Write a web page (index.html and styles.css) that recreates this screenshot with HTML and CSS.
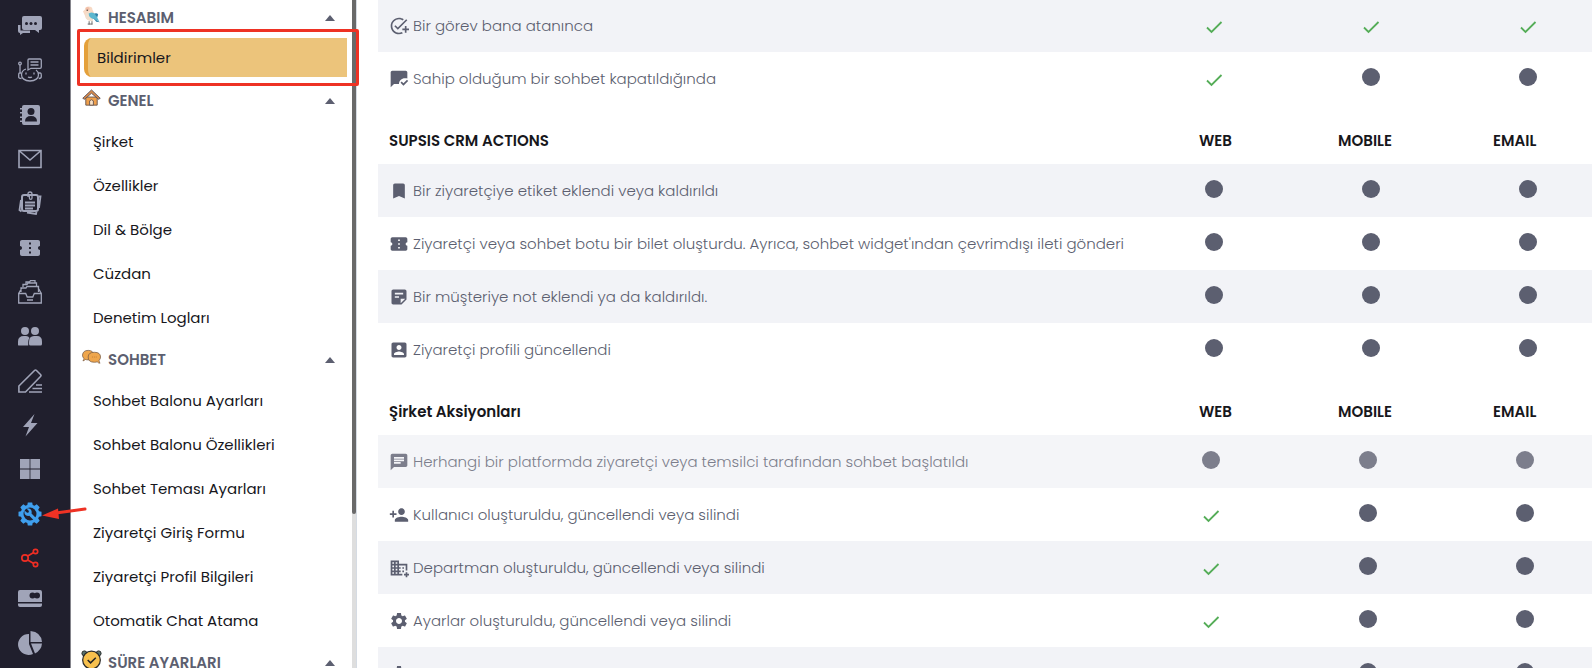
FILE: index.html
```html
<!DOCTYPE html>
<html lang="tr">
<head>
<meta charset="utf-8">
<meta name="viewport" content="width=device-width, initial-scale=1">
<title>Bildirimler</title>
<link rel="stylesheet" href="styles.css">
</head>
<body>
<svg class="sprite" aria-hidden="true">
  <symbol id="add-task" viewBox="0 0 24 24"><path d="M22 5.18 10.59 16.6l-4.24-4.24 1.41-1.41 2.83 2.83 10-10zM12 20c-4.41 0-8-3.59-8-8s3.59-8 8-8c1.57 0 3.04.46 4.28 1.25l1.45-1.45C16.1 2.67 14.13 2 12 2 6.48 2 2 6.48 2 12s4.48 10 10 10c1.73 0 3.36-.44 4.78-1.22l-1.5-1.5c-1 .46-2.11.72-3.28.72zm7-5h-3v2h3v3h2v-3h3v-2h-3v-3h-2z"/></symbol>
  <symbol id="chat-read" viewBox="0 0 24 24"><path d="M12 18H6l-4 4V4c0-1.1.9-2 2-2h16c1.1 0 2 .9 2 2v7.300c-1-.3-2-.4-3-.3-3.900 0-7 3.100-7 7zM23 14.34l-1.410-1.410-4.240 4.240-2.120-2.120-1.410 1.410L17.340 20z"/></symbol>
  <symbol id="bookmark" viewBox="0 0 24 24"><path d="M17 3H7c-1.100 0-2 .9-2 2v16l7-3 7 3V5c0-1.100-.9-2-2-2z"/></symbol>
  <symbol id="ticket" viewBox="0 0 24 24"><path d="M22 10V6c0-1.110-.9-2-2-2H4c-1.100 0-2 .89-2 2v4c1.100 0 2 .9 2 2s-.9 2-2 2v4c0 1.100.9 2 2 2h16c1.100 0 2-.9 2-2v-4c-1.100 0-2-.9-2-2s.9-2 2-2zm-9 7.500h-2v-2h2zm0-4.500h-2v-2h2zm0-4.500h-2v-2h2z"/></symbol>
  <symbol id="note" viewBox="0 0 24 24"><path fill-rule="evenodd" d="M5 3h14c1.100 0 2 .9 2 2v10l-6 6H5c-1.100 0-2-.9-2-2V5c0-1.100.9-2 2-2zm2 4v2h10V7zm0 4v2h5v-2zm7 3v5.500l5.500-5.500z"/></symbol>
  <symbol id="profile" viewBox="0 0 24 24"><path d="M3 5v14c0 1.100.89 2 2 2h14c1.100 0 2-.9 2-2V5c0-1.100-.9-2-2-2H5c-1.110 0-2 .9-2 2zm12 4c0 1.660-1.340 3-3 3s-3-1.340-3-3 1.340-3 3-3 3 1.340 3 3zm-9 8c0-2 4-3.100 6-3.100s6 1.100 6 3.100v1H6z"/></symbol>
  <symbol id="chat" viewBox="0 0 24 24"><path d="M20 2H4c-1.100 0-2 .9-2 2v18l4-4h14c1.100 0 2-.9 2-2V4c0-1.100-.9-2-2-2zM6 9h12v2H6zm8 5H6v-2h8zm4-6H6V6h12z"/></symbol>
  <symbol id="person-add" viewBox="0 0 24 24"><path d="M15 12c2.210 0 4-1.790 4-4s-1.790-4-4-4-4 1.790-4 4 1.790 4 4 4zm-9-2V7H4v3H1v2h3v3h2v-3h3v-2zm9 4c-2.670 0-8 1.340-8 4v2h16v-2c0-2.660-5.330-4-8-4z"/></symbol>
  <symbol id="domain-add" viewBox="0 0 24 24"><path d="M12 7V3H2v18h14v-2h-4v-2h2v-2h-2v-2h2v-2h-2V9h8v6h2V7zM6 19H4v-2h2zm0-4H4v-2h2zm0-4H4V9h2zm0-4H4V5h2zm4 12H8v-2h2zm0-4H8v-2h2zm0-4H8V9h2zm0-4H8V5h2zm14 12v2h-2v2h-2v-2h-2v-2h2v-2h2v2zm-6-8h-2v2h2zm0 4h-2v2h2z"/></symbol>
  <symbol id="gear" viewBox="0 0 24 24"><path d="M19.140 12.940c.04-.3.06-.61.06-.94 0-.32-.02-.64-.07-.94l2.030-1.580c.18-.14.23-.41.12-.61l-1.920-3.320c-.12-.22-.37-.29-.59-.22l-2.390.96c-.5-.38-1.030-.7-1.620-.94l-.36-2.540c-.04-.24-.24-.41-.48-.41h-3.840c-.24 0-.43.17-.47.41l-.36 2.540c-.59.24-1.130.57-1.620.94l-2.390-.96c-.22-.08-.47 0-.59.22L2.740 8.870c-.12.21-.08.47.12.61l2.030 1.580c-.05.3-.09.63-.09.94s.02.64.07.94l-2.030 1.580c-.18.14-.23.41-.12.61l1.920 3.320c.12.22.37.29.59.22l2.390-.96c.5.38 1.030.7 1.620.94l.36 2.540c.05.24.24.41.48.41h3.840c.24 0 .44-.17.47-.41l.36-2.540c.59-.24 1.130-.56 1.620-.94l2.390.96c.22.08.47 0 .59-.22l1.920-3.320c.12-.22.07-.47-.12-.61zM12 15.600c-1.980 0-3.600-1.620-3.600-3.600s1.620-3.600 3.600-3.600 3.600 1.620 3.600 3.600-1.620 3.600-3.600 3.600z"/></symbol>
</svg>

<div class="app">
  <nav class="rail" aria-label="Ana menü">
    <a href="#" aria-label="Sohbetler"><svg viewBox="0 0 24 24"><path d="M6 2h16a2 2 0 0 1 2 2v10a2 2 0 0 1-2 2h-1v3l-4-3H6a2 2 0 0 1-2-2V4a2 2 0 0 1 2-2z"/><path d="M0 11h2.500v5.500H12V19H5l-3 2v-2a2 2 0 0 1-2-2z"/><g fill="#201f2d"><circle cx="8.500" cy="9.500" r="1.500"/><circle cx="13" cy="9.500" r="1.500"/><circle cx="17.500" cy="9.500" r="1.500"/></g></svg></a>
    <a href="#" aria-label="Sohbet botu"><svg class="line" viewBox="0 0 24 24"><path d="M8 11c-3 1-4.500 3-4.500 6s3 6 8.500 6 8.500-3 8.500-6c0-2-1-4-2.500-5M3 15H1.500Q.7 15 .7 17v2q0 1.500 2.800 1.500M20.500 15h1.800q1 0 1 2v1.500q0 2-2.500 2M2 15V7"/><circle cx="2" cy="5.500" r="1.300"/><path d="M11 1h11q1.300 0 1.300 1.300V9q0 1.300-1.300 1.300h-9L10 12V2q0-1 1-1zM12.500 4h8M12.500 7h8M8 14.500v2M16 14.500v2M10 19q2 1 4 0"/></svg></a>
    <a href="#" aria-label="Kişiler"><svg viewBox="0 0 24 24"><path d="M6 2h14a2 2 0 0 1 2 2v16a2 2 0 0 1-2 2H6a2 2 0 0 1-2-2v-1H2v-1.500h2V15H2v-1.500h2v-3H2V9h2V6.500H2V5h2V4a2 2 0 0 1 2-2z"/><circle cx="13" cy="8.500" r="3.500" fill="#201f2d"/><path fill="#201f2d" d="M7 18.500q0-5.500 6-5.500t6 5.500z"/></svg></a>
    <a href="#" aria-label="E-posta"><svg class="line" viewBox="0 0 24 24"><path stroke-width="1.600" d="M1 3.500h22v17H1zM1.500 4 12 13 22.500 4"/></svg></a>
    <a href="#" aria-label="Görevler"><svg class="line" viewBox="0 0 24 24"><path stroke-width="2" d="M6 4h12q2 0 2 2v12q0 2-2 2H6q-2 0-2-2V6q0-2 2-2z"/><path stroke-width="1.800" d="M21 5.500h1.500L21 17M3 9 1.500 19l2 1.500M9 21.500l9 1.500.5-2"/><path d="M10 6V3q0-2 2-2t2 2v4q0 1.300-1.300 1.300T11.400 7V5"/><path stroke-width="2" d="M7 11.500h10M7 14.500h10M7 17.500h8"/></svg></a>
    <a href="#" aria-label="Biletler"><svg><use href="#ticket"/></svg></a>
    <a href="#" aria-label="Arşiv"><svg class="line" viewBox="0 0 24 24"><path d="M.7 13.500h7l1.500 3.500h5.600l1.500-3.500h7V23H.7zM.7 13.500 4 7.500M23.300 13.500 20 7.500M3 12V8h5l1-1.500h11.500V12M5 7V4.500h4L10 3h8.500v3M8 4V2h3.500l1-1.300H17V3M9 20h6"/></svg></a>
    <a href="#" aria-label="Ekip"><svg viewBox="0 0 24 24"><circle cx="7" cy="7" r="4"/><circle cx="17" cy="7" r="4"/><path d="M0 21v-3.500Q0 12 6 12h2q2.500 0 3.500 2-1.300 1.500-1.300 4v3.500H1.500Q0 21.500 0 21z"/><path d="M11 18q0-6 5-6h3q5 0 5 5.500V20q0 1.500-1.500 1.500h-10Q11 21.500 11 20z"/></svg></a>
    <a href="#" aria-label="Düzenle"><svg class="line" viewBox="0 0 24 24"><path stroke-width="1.600" d="M.9 23V17L16.500 1.500q1-1 2 0l4 4q1 1 0 2L7.500 23zM18 16h6M14.500 19.500H24M11 23h13"/></svg></a>
    <a href="#" aria-label="Hızlı işlemler"><svg viewBox="0 0 24 24"><path d="M16.500 1 5 14h6L7.500 23.500 19.500 10H13z"/></svg></a>
    <a href="#" aria-label="Uygulamalar"><svg viewBox="0 0 24 24"><path d="M2 2h9.600v9.600H2zM12.400 2H22v9.600h-9.600zM2 12.400h9.600V22H2zM12.400 12.400H22V22h-9.600z"/></svg></a>
    <a href="#" class="current" aria-label="Ayarlar" aria-current="page"><svg viewBox="0 0 24 24"><path fill-rule="evenodd" d="M9.800.500h4.400l.5 2.600 1.800.7 2.200-1.500 3 3-1.500 2.200.8 1.800 2.500.5v4.400l-2.500.5-.8 1.800 1.500 2.200-3 3-2.200-1.500-1.800.8-.5 2.500H9.800L9.300 21l-1.800-.8-2.200 1.500-3-3 1.500-2.200L3 14.700.500 14.200V9.800L3 9.300l.8-1.800-1.500-2.200 3-3 2.200 1.500 1.800-.7zM12 5.500a6.500 6.500 0 1 0 0 13 6.500 6.500 0 0 0 0-13z"/><path d="M8.500 6.500l2.400 2.400-.3 1.500-1.500.3L6.500 8.500Q5.800 12.800 9 13.800q1.300.3 2.300 0l5.200 5.200 2.200-2.200-5.200-5.200q.7-2.800-1-4.300-1.800-1.400-4-.8z"/></svg></a>
    <a href="#" class="alert" aria-label="Paylaş"><svg class="line" viewBox="0 0 24 24"><g stroke-width="1.700"><circle cx="7" cy="12" r="3.200"/><circle cx="17.500" cy="5.500" r="2.200"/><circle cx="17.500" cy="18.500" r="2.200"/><path d="m9.700 10 6-3.500M9.700 14l6 3.500"/></g></svg></a>
    <a href="#" class="short" aria-label="Ödeme"><svg viewBox="0 0 24 24"><path fill-rule="evenodd" d="M2 2h20q2 0 2 2v10H0V4q0-2 2-2zM0 15.500h24V17q0 2-2 2H2q-2 0-2-2z"/><g fill="#201f2d"><circle cx="14.500" cy="7.500" r="3"/><circle cx="19" cy="7.500" r="3"/></g></svg></a>
    <a href="#" aria-label="Raporlar"><svg viewBox="0 0 24 24"><path d="M11 3v10l4 10A10.500 10.500 0 1 1 11 3z"/><path d="M12.500 0Q23 1 24 11H12.500zM13 12.500h11Q23.500 19 17 22.500z"/></svg></a>
  </nav>

  <aside class="sidebar">
    <div class="menu">
      <section>
        <button class="group" aria-expanded="true"><svg viewBox="0 0 20 20"><path fill="#f7d9c4" d="M1 5.500 3 4q0-3.500 4-3.500T11 4l2 4-2 8q-7 0-8-6z"/><circle cx="6" cy="3" r="2" fill="#f2bfa8"/><circle cx="5.500" cy="4.500" r=".7" fill="#333"/><path fill="#f0e0cf" d="M4 8q-2 7 7 8l2-7-4-3z"/><path fill="#5bb7cf" d="M7 8q5-3 8 2l3 6-5-2q-6-1-6-6z"/><path fill="#2f7fa6" d="M13 8q3-1 4 1l-1 3zM12 13l7 4-4-.500z"/><path stroke="#666" stroke-width="1" fill="none" d="M7.500 16v3.500M10.500 16v3.500M6 19h5"/></svg><span>HESABIM</span></button>
        <a href="#" class="item active" aria-current="page">Bildirimler</a>
      </section>
      <section>
        <button class="group" aria-expanded="true"><svg viewBox="0 0 20 20"><path fill="#f0a04b" stroke="#6c5750" d="M4 8.500h12V17H4z"/><path fill="#fbe3c6" stroke="#6c5750" d="M8 17v-4.500q2-2.500 4 0V17z"/><path fill="#d98a48" stroke="#5f545b" d="M.8 9.800 10 1l9.200 8.800-1.800 1L10 4.500l-7.400 6.300z"/></svg><span>GENEL</span></button>
        <a href="#" class="item">Şirket</a>
        <a href="#" class="item">Özellikler</a>
        <a href="#" class="item">Dil &amp; Bölge</a>
        <a href="#" class="item">Cüzdan</a>
        <a href="#" class="item">Denetim Logları</a>
      </section>
      <section>
        <button class="group" aria-expanded="true"><svg viewBox="0 0 20 20"><path fill="#efa64c" stroke="#7a5d45" stroke-width=".8" d="M1 13.500q1-1 1-2.500Q.500 9.500.500 7.500q.500-5 6-5t6 5-6 5q-2 0-3-.500-1 1.500-2.500 1.500z"/><path fill="#efa64c" stroke="#7a5d45" stroke-width=".8" d="M13 4.500q6.500 0 6.500 5 0 2-1.500 3.500 0 2 1 3-2 0-3-1.500-1 .5-3 .5-6.500 0-6.500-5.500 0-5 6.500-5z"/><path stroke="#c77f34" stroke-dasharray="1 1" d="M10.500 9.500h6"/></svg><span>SOHBET</span></button>
        <a href="#" class="item">Sohbet Balonu Ayarları</a>
        <a href="#" class="item">Sohbet Balonu Özellikleri</a>
        <a href="#" class="item">Sohbet Teması Ayarları</a>
        <a href="#" class="item">Ziyaretçi Giriş Formu</a>
        <a href="#" class="item">Ziyaretçi Profil Bilgileri</a>
        <a href="#" class="item">Otomatik Chat Atama</a>
      </section>
      <section>
        <button class="group" aria-expanded="true"><svg viewBox="0 0 20 20"><g fill="#58756f" stroke="#222"><circle cx="2.500" cy="2.500" r="2.600"/><circle cx="17.500" cy="2.500" r="2.600"/></g><circle cx="10" cy="9.500" r="9.300" fill="#f7c04d" stroke="#2a2a2a" stroke-width="1.300"/><path fill="none" stroke="#222" stroke-width="1.500" d="m6 9.500 3 3 5.500-5.500"/></svg><span>SÜRE AYARLARI</span></button>
      </section>
    </div>
    <div class="track"><div class="thumb"></div></div>
  </aside>

  <main class="content">
    <table>
      <colgroup><col><col class="wide"><col class="wide"><col class="narrow"></colgroup>
      <tbody>
        <tr><td><span class="event"><svg><use href="#add-task"/></svg>Bir görev bana atanınca</span></td><td><input type="checkbox" aria-label="Web" checked></td><td><input type="checkbox" aria-label="Mobile" checked></td><td><input type="checkbox" aria-label="Email" checked></td></tr>
        <tr><td><span class="event"><svg><use href="#chat-read"/></svg>Sahip olduğum bir sohbet kapatıldığında</span></td><td><input type="checkbox" aria-label="Web" checked></td><td><input type="checkbox" aria-label="Mobile"></td><td><input type="checkbox" aria-label="Email"></td></tr>
      </tbody>
    </table>
    <table>
      <colgroup><col><col class="wide"><col class="wide"><col class="narrow"></colgroup>
      <thead><tr><th scope="col">SUPSIS CRM ACTIONS</th><th scope="col" class="web">WEB</th><th scope="col" class="mobile">MOBILE</th><th scope="col" class="email">EMAIL</th></tr></thead>
      <tbody>
        <tr><td><span class="event"><svg><use href="#bookmark"/></svg>Bir ziyaretçiye etiket eklendi veya kaldırıldı</span></td><td><input type="checkbox" aria-label="Web"></td><td><input type="checkbox" aria-label="Mobile"></td><td><input type="checkbox" aria-label="Email"></td></tr>
        <tr><td><span class="event"><svg><use href="#ticket"/></svg>Ziyaretçi veya sohbet botu bir bilet oluşturdu. Ayrıca, sohbet widget'ından çevrimdışı ileti gönderi</span></td><td><input type="checkbox" aria-label="Web"></td><td><input type="checkbox" aria-label="Mobile"></td><td><input type="checkbox" aria-label="Email"></td></tr>
        <tr><td><span class="event"><svg><use href="#note"/></svg>Bir müşteriye not eklendi ya da kaldırıldı.</span></td><td><input type="checkbox" aria-label="Web"></td><td><input type="checkbox" aria-label="Mobile"></td><td><input type="checkbox" aria-label="Email"></td></tr>
        <tr><td><span class="event"><svg><use href="#profile"/></svg>Ziyaretçi profili güncellendi</span></td><td><input type="checkbox" aria-label="Web"></td><td><input type="checkbox" aria-label="Mobile"></td><td><input type="checkbox" aria-label="Email"></td></tr>
      </tbody>
    </table>
    <table class="company">
      <colgroup><col><col class="wide"><col class="wide"><col class="narrow"></colgroup>
      <thead><tr><th scope="col">Şirket Aksiyonları</th><th scope="col" class="web">WEB</th><th scope="col" class="mobile">MOBILE</th><th scope="col" class="email">EMAIL</th></tr></thead>
      <tbody>
        <tr class="muted"><td><span class="event"><svg><use href="#chat"/></svg>Herhangi bir platformda ziyaretçi veya temsilci tarafından sohbet başlatıldı</span></td><td><input type="checkbox" aria-label="Web"></td><td><input type="checkbox" aria-label="Mobile"></td><td><input type="checkbox" aria-label="Email"></td></tr>
        <tr><td><span class="event"><svg><use href="#person-add"/></svg>Kullanıcı oluşturuldu, güncellendi veya silindi</span></td><td><input type="checkbox" aria-label="Web" checked></td><td><input type="checkbox" aria-label="Mobile"></td><td><input type="checkbox" aria-label="Email"></td></tr>
        <tr><td><span class="event"><svg><use href="#domain-add"/></svg>Departman oluşturuldu, güncellendi veya silindi</span></td><td><input type="checkbox" aria-label="Web" checked></td><td><input type="checkbox" aria-label="Mobile"></td><td><input type="checkbox" aria-label="Email"></td></tr>
        <tr><td><span class="event"><svg><use href="#gear"/></svg>Ayarlar oluşturuldu, güncellendi veya silindi</span></td><td><input type="checkbox" aria-label="Web" checked></td><td><input type="checkbox" aria-label="Mobile"></td><td><input type="checkbox" aria-label="Email"></td></tr>
        <tr><td><span class="event"><svg><use href="#gear"/></svg></span></td><td><input type="checkbox" aria-label="Web" checked></td><td><input type="checkbox" aria-label="Mobile"></td><td><input type="checkbox" aria-label="Email"></td></tr>
      </tbody>
    </table>
  </main>

  <div class="mark-box"></div>
  <svg class="mark-arrow" viewBox="0 0 46 14" aria-hidden="true"><path stroke="#ee3224" stroke-width="3" stroke-linecap="round" d="M14 7 43 3"/><path fill="#ee3224" d="M0 9.500 16 2.500 17 13z"/></svg>
</div>
</body>
</html>
```
FILE: styles.css
```css
* { box-sizing: border-box; }

body {
  margin: 0;
  background: #fff;
  font-family: Poppins, Inter, "Noto Sans", sans-serif;
  font-size: 15px;
  line-height: 24px;
}

a { color: inherit; text-decoration: none; }

.sprite { position: absolute; width: 0; height: 0; }

.app {
  position: relative;
  display: flex;
  height: 100vh;
  overflow: hidden;
}

/* icon rail */
.rail {
  flex: none;
  display: flex;
  flex-direction: column;
  width: 71px;
  padding-top: 4px;
  overflow: hidden;
  background: #201f2d;
  border-right: 1px solid #85858c;
  color: #a0a4b8;
}
.rail a {
  flex: none;
  display: flex;
  align-items: center;
  height: 44px;
  padding-left: 18px;
}
.rail a:nth-child(3n) { height: 45px; }
.rail a.short { height: 40px; }
.rail svg { width: 24px; height: 24px; fill: currentColor; }
.rail .line { fill: none; stroke: currentColor; stroke-width: 1.3px; }
.rail .current { color: #3f9fee; }
.rail .alert { color: #ee2e24; }

/* settings menu */
.sidebar {
  flex: none;
  display: flex;
  width: 286px;
  border-right: 1px solid #d5dbe3;
}
.menu { flex: 1; margin-top: -3px; overflow: hidden; }
.group {
  display: flex;
  align-items: center;
  gap: 7px;
  width: 100%;
  height: 39px;
  padding: 2px 17px 0 11px;
  border: 0;
  background: none;
  color: #5c5f70;
  font: inherit;
  font-weight: 600;
  text-align: left;
}
.group svg { flex: none; width: 19px; height: 19px; margin-bottom: 4px; overflow: visible; fill: none; }
.group::after {
  content: "";
  margin-left: auto;
  border: 5px solid transparent;
  border-top: 0;
  border-bottom: 6px solid #5c5f70;
}
.item {
  display: flex;
  align-items: center;
  height: 44px;
  padding-top: 1px;
  padding-left: 22px;
  color: #17171c;
}
.item.active {
  height: 39px;
  margin: 2px 5px 3px 13px;
  padding-left: 9px;
  border-left: 4px solid #e4a03a;
  border-radius: 8px 0 0 8px;
  background: #ecc47b;
}
.track { width: 4px; background: #dedede; }
.thumb { height: 77%; border-radius: 0 0 2px 2px; background: #696969; }

/* notification tables */
.content {
  flex: 1;
  min-width: 0;
  margin-top: -1px;
  padding-left: 21px;
  overflow: hidden;
}
table { width: 100%; table-layout: fixed; border-collapse: collapse; }
.wide { width: 157px; }
.narrow { width: 99px; }
td, th { padding: 0; text-align: left; }
th {
  height: 59px;
  padding-top: 24px;
  color: #17171c;
  font-weight: 600;
  vertical-align: top;
}
th.web { padding-left: 20px; }
th.mobile { padding-left: 2px; }
td {
  height: 53px;
  padding-left: 26px;
  color: #5c5f70;
  font-weight: 300;
}
th:first-child, td:first-child { padding-left: 11px; }
.company td:not(:first-child) { padding-left: 23px; }
tbody tr:nth-child(odd) { background: #f2f3f7; }
.muted { opacity: 0.8; }
.event { display: flex; align-items: center; gap: 4px; white-space: nowrap; }
.event svg { flex: none; width: 20px; height: 20px; fill: currentColor; }

input[type="checkbox"] {
  appearance: none;
  display: block;
  width: 18px;
  height: 22px;
  margin: 0;
  background: url("data:image/svg+xml,%3Csvg xmlns='http://www.w3.org/2000/svg' viewBox='0 0 18 22'%3E%3Ccircle cx='9' cy='9' r='9' fill='%235c5f70'/%3E%3C/svg%3E") no-repeat;
}
input[type="checkbox"]:checked {
  background-image: url("data:image/svg+xml,%3Csvg xmlns='http://www.w3.org/2000/svg' viewBox='0 0 18 22'%3E%3Cpath d='M2 12.500l4.500 4.500L16.500 7' fill='none' stroke='%2355ad58' stroke-width='1.800'/%3E%3C/svg%3E");
}

/* callouts drawn over the page */
.mark-box {
  position: absolute;
  top: 29px;
  left: 77px;
  width: 282px;
  height: 57px;
  border: 3px solid #ee3224;
  border-radius: 2px;
}
.mark-arrow {
  position: absolute;
  top: 506px;
  left: 42px;
  width: 46px;
  height: 14px;
  fill: none;
}
```
